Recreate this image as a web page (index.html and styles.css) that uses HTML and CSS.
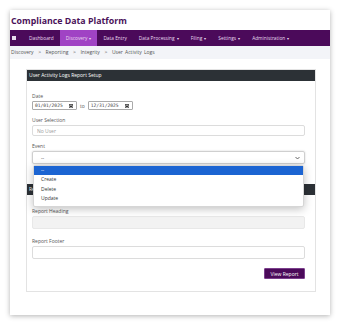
FILE: index.html
```html
<!DOCTYPE html>
<html lang="en">
  <head>
    <meta charset="UTF-8" />
    <title>Compliance Data Platform</title>
    <link rel="stylesheet" href="styles.css">
  </head>
  <body>
    <div class="frame">
      <h1 class="brand">Compliance Data Platform</h1>

      <nav class="topnav">
        <span class="nav-toggle">
          <svg width="4" height="4" viewBox="0 0 4 4"><rect width="4" height="4" fill="#e9dcef" /></svg>
        </span>
        <a class="nav-item">Dashboard</a>
        <a class="nav-item active">Discovery <span class="caret">▾</span></a>
        <a class="nav-item">Data Entry</a>
        <a class="nav-item">Data Processing <span class="caret">▾</span></a>
        <a class="nav-item">Filing <span class="caret">▾</span></a>
        <a class="nav-item">Settings <span class="caret">▾</span></a>
        <a class="nav-item">Administration <span class="caret">▾</span></a>
      </nav>

      <div class="crumbs">
        Discovery &nbsp;&gt;&nbsp; Reporting &nbsp;&gt;&nbsp; Integrity &nbsp;&gt;&nbsp; User Activity Logs
      </div>

      <main class="content">
        <section class="card">
          <div class="card-head">User Activity Logs Report Setup</div>
          <div class="card-body">
            <label class="field-label">Date</label>
            <div class="date-row">
              <div class="date-input">
                <span>01/01/2025</span>
                <svg class="cal" width="4" height="4" viewBox="0 0 8 8"><rect x="0.5" y="1" width="7" height="6.5" fill="none" stroke="#333" /><rect x="0.5" y="1" width="7" height="2" fill="#333" /><rect x="2" y="4" width="4" height="2" fill="#333" /></svg>
              </div>
              <span class="date-to">to</span>
              <div class="date-input">
                <span>12/31/2025</span>
                <svg class="cal" width="4" height="4" viewBox="0 0 8 8"><rect x="0.5" y="1" width="7" height="6.5" fill="none" stroke="#333" /><rect x="0.5" y="1" width="7" height="2" fill="#333" /><rect x="2" y="4" width="4" height="2" fill="#333" /></svg>
              </div>
            </div>

            <label class="field-label gap">User Selection</label>
            <input class="text-input" type="text" placeholder="No User" />

            <label class="field-label gap">Event</label>
            <div class="select-wrap">
              <div class="select-box">
                <span>--</span>
                <svg width="5" height="4" viewBox="0 0 10 8"><path d="M1 2l4 4 4-4" fill="none" stroke="#444" stroke-width="1.6" /></svg>
              </div>
              <ul class="dropdown">
                <li class="selected">--</li>
                <li>Create</li>
                <li>Delete</li>
                <li>Update</li>
              </ul>
            </div>
          </div>

          <div class="card-head">Report Options</div>
          <div class="card-body last">
            <label class="field-label">Report Heading</label>
            <input class="text-input tall disabled" type="text" disabled />

            <label class="field-label gap">Report Footer</label>
            <input class="text-input tall" type="text" />

            <div class="actions">
              <button class="btn">View Report</button>
            </div>
          </div>
        </section>
      </main>
    </div>
  </body>
</html>
```

FILE: styles.css
```css
* {
  box-sizing: border-box;
}
body {
  margin: 0;
  padding: 10px;
  font-family: "Open Sans", sans-serif;
  background: #fff;
}
.frame {
  width: 320px;
  background: #fff;
  box-shadow: 0 1px 5px rgba(0, 0, 0, 0.3);
}
.brand {
  margin: 0;
  height: 20px;
  line-height: 22px;
  padding-left: 1px;
  font-size: 8.8px;
  font-weight: 700;
  color: #4a1259;
}
.topnav {
  display: flex;
  align-items: center;
  height: 16px;
  background: #4b0a5a;
  font-size: 4.8px;
}
.nav-toggle {
  width: 13px;
  padding-left: 2px;
  display: flex;
  align-items: center;
}
.nav-item {
  height: 100%;
  display: flex;
  align-items: center;
  padding: 0 6px;
  color: #eadcf0;
}
.nav-item.active {
  background: #a043c4;
}
.caret {
  margin-left: 2px;
  font-size: 4px;
}
.crumbs {
  height: 13px;
  line-height: 13px;
  padding-left: 1px;
  background: #f3f4f8;
  font-size: 5px;
  word-spacing: 1px;
  color: #555;
}
.content {
  padding: 10px 14px 23px 16px;
}
.card {
  border: 1px solid #e3e3e3;
}
.card-head {
  height: 11px;
  line-height: 11px;
  padding-left: 2px;
  background: #2c3136;
  color: #fff;
  font-size: 5px;
}
.card-body {
  padding: 12px 10px 20px 5px;
}
.card-body.last {
  padding: 13px 10px 12px 5px;
}
.field-label {
  display: block;
  height: 6px;
  line-height: 6px;
  margin-bottom: 2px;
  font-size: 5px;
  color: #555;
}
.field-label.gap {
  margin-top: 7px;
}
.card-body.last .field-label.gap,
.select-wrap + .field-label {
  margin-top: 9px;
}
.date-row {
  display: flex;
  align-items: center;
}
.date-input {
  width: 45px;
  height: 9px;
  display: flex;
  align-items: center;
  justify-content: space-between;
  padding: 0 3px 0 2px;
  border: 1px solid #aaa;
  border-radius: 1px;
  font-family: "DejaVu Sans Mono", monospace;
  font-size: 4.6px;
  color: #444;
}
.date-to {
  margin: 0 3px;
  font-size: 5px;
  color: #555;
}
.text-input {
  display: block;
  width: 100%;
  height: 11px;
  padding: 0 4px;
  border: 1px solid #dcdcdc;
  border-radius: 2px;
  font-family: inherit;
  font-size: 5px;
  background: #fff;
}
.text-input::placeholder {
  color: #9a9a9a;
}
.text-input.tall {
  height: 13px;
}
.text-input.disabled {
  background: #f2f2f2;
  border-color: #e8e8e8;
}
.select-wrap {
  position: relative;
}
.select-box {
  height: 13px;
  display: flex;
  align-items: center;
  justify-content: space-between;
  padding: 0 4px 0 8px;
  border: 1px solid #cfcfcf;
  border-radius: 2px;
  box-shadow: 0 0 2px rgba(0, 0, 0, 0.2);
  font-size: 5px;
  color: #444;
}
.dropdown {
  position: absolute;
  top: 14px;
  left: 1px;
  right: 1px;
  margin: 0;
  padding: 0 0 2px;
  list-style: none;
  background: #fff;
  border: 1px solid #d6d6d6;
  border-radius: 2px;
  box-shadow: 0 2px 8px rgba(0, 0, 0, 0.25);
  font-size: 5px;
  color: #333;
}
.dropdown li {
  height: 9.5px;
  line-height: 9.5px;
  padding-left: 7px;
}
.dropdown li.selected {
  height: 9px;
  background: #1b64d2;
  color: #fff;
}
.actions {
  display: flex;
  justify-content: flex-end;
  margin-top: 9px;
}
.btn {
  width: 41px;
  height: 11px;
  padding: 0;
  border: 1px solid #7b3f8c;
  border-radius: 1px;
  background: #4b0a5a;
  color: #fff;
  font-family: inherit;
  font-size: 5px;
}
```
